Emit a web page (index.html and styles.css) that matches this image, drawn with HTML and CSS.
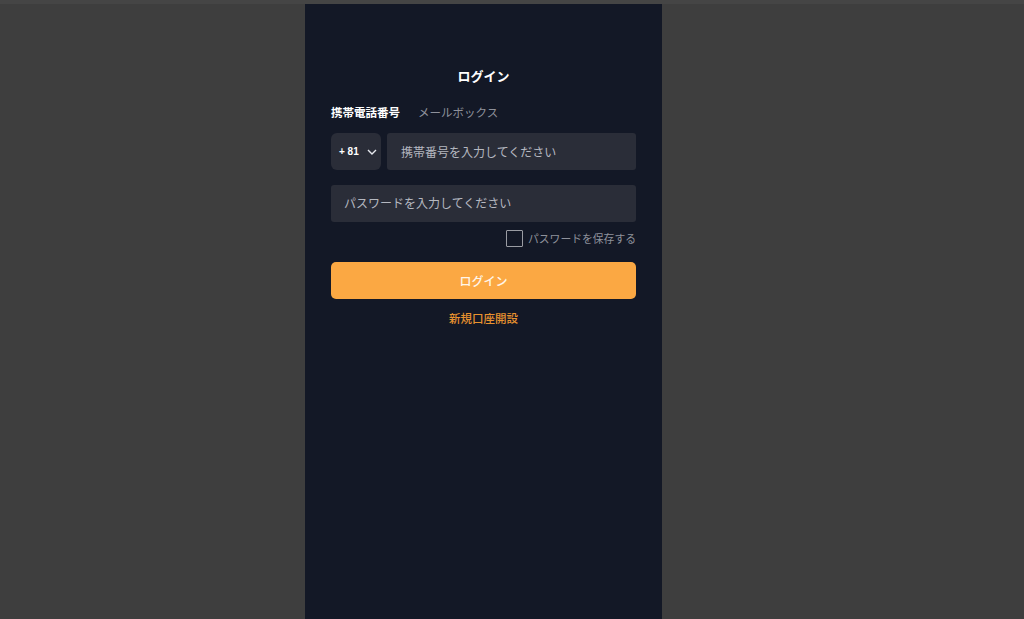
FILE: index.html
```html
<!DOCTYPE html>
<html lang="ja">
<head>
<meta charset="utf-8">
<link rel="stylesheet" href="styles.css">
</head>
<body>
<div class="page">
  <main class="panel">
    <h1 class="title">ログイン</h1>
    <div class="tabs">
      <span class="tab active">携帯電話番号</span>
      <span class="tab">メールボックス</span>
    </div>
    <div class="phone-row">
      <div class="country">
        <span class="code">+ 81</span>
        <svg class="chev" width="10" height="6" viewBox="0 0 10 6"><path d="M1 1l4 4 4-4" fill="none" stroke="#e6e8ee" stroke-width="1.4"/></svg>
      </div>
      <div class="field phone">携帯番号を入力してください</div>
    </div>
    <div class="field pwd">パスワードを入力してください</div>
    <div class="remember">
      <span class="box"></span>
      <span class="remember-label">パスワードを保存する</span>
    </div>
    <div class="btn">ログイン</div>
    <div class="signup">新規口座開設</div>
  </main>
</div>
</body>
</html>
```

FILE: styles.css
```css
* { box-sizing: border-box; }
html, body { margin: 0; padding: 0; }
body {
  background: #3e3e3e;
  font-family: "Noto Sans CJK JP", "Noto Sans", sans-serif;
  height: 619px;
  overflow: hidden;
  border-top: 4px solid #454545;
}
.page {
  display: flex;
  padding-left: 305px;
}
.panel {
  width: 357px;
  height: 615px;
  background: #131826;
  padding: 64px 26px 0 26px;
  display: flex;
  flex-direction: column;
}
.title {
  margin: 0;
  text-align: center;
  color: #ffffff;
  font-size: 13px;
  font-weight: 700;
  line-height: 16px;
}
.tabs {
  display: flex;
  gap: 18px;
  margin-top: 20px;
  font-size: 11.5px;
  line-height: 16px;
}
.tab { color: #8e919b; }
.tab.active { color: #ffffff; font-weight: 700; }
.phone-row {
  display: flex;
  gap: 6px;
  margin-top: 13px;
  height: 37px;
}
.country {
  width: 50px;
  flex: none;
  background: #2a2d38;
  border-radius: 6px;
  display: flex;
  align-items: center;
  justify-content: space-between;
  padding: 0 4px 0 8px;
}
.code {
  color: #ffffff;
  font-family: "Liberation Sans", sans-serif;
  font-weight: 700;
  font-size: 10px;
}
.chev { display: block; }
.field {
  background: #2a2d38;
  border-radius: 3px;
  color: #b5b8c0;
  font-size: 12px;
  display: flex;
  align-items: center;
  height: 37px;
}
.phone { flex: 1; padding-left: 14px; padding-bottom: 1px; }
.pwd { margin-top: 15px; padding-left: 13px; padding-bottom: 2px; }
.remember {
  display: flex;
  justify-content: flex-end;
  align-items: center;
  gap: 5px;
  margin-top: 7px;
  height: 18px;
}
.box {
  width: 17px;
  height: 17px;
  border: 1px solid #9a9ca3;
  border-radius: 1px;
}
.remember-label {
  color: #8e919b;
  font-size: 10.8px;
}
.btn {
  margin-top: 15px;
  height: 37px;
  background: #fba843;
  border-radius: 5px;
  color: #fff6ea;
  font-size: 12px;
  font-weight: 500;
  display: flex;
  align-items: center;
  justify-content: center;
  padding-bottom: 1px;
}
.signup {
  margin-top: 11px;
  text-align: center;
  color: #e8922f;
  font-size: 11.5px;
  line-height: 16px;
  font-weight: 500;
}
```
